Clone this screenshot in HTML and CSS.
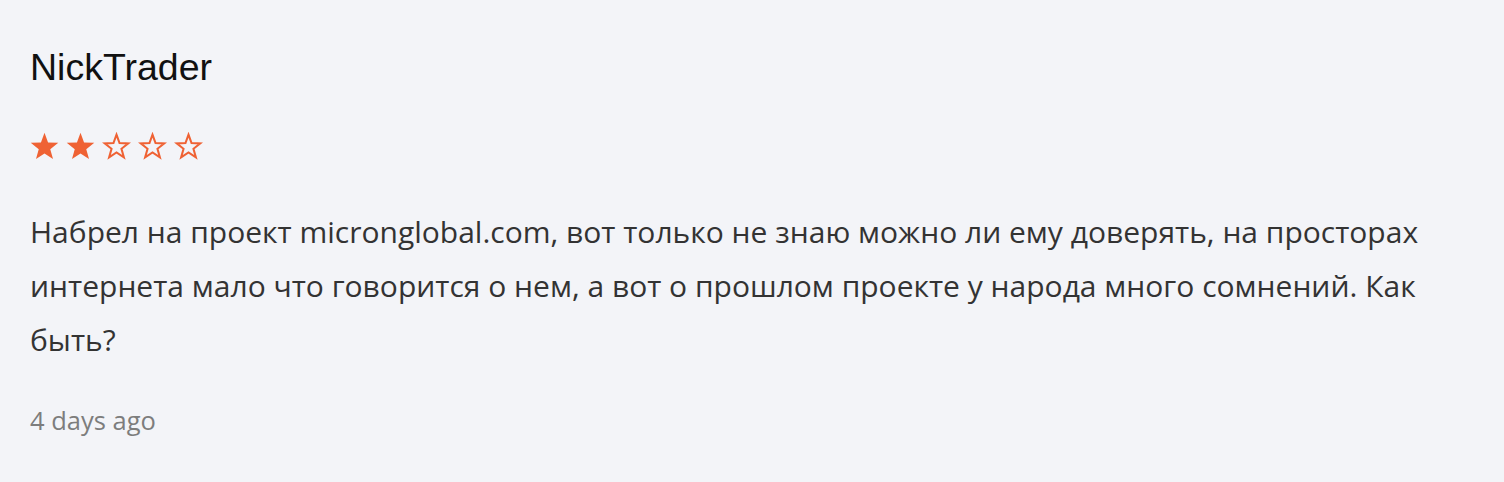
FILE: index.html
```html
<!DOCTYPE html>
<html lang="ru">
<head>
    <meta charset="UTF-8">
    <meta name="viewport" content="width=device-width, initial-scale=1.0">
    <title>NickTrader review</title>
    <link rel="stylesheet" href="styles.css">
</head>
<body>
    <div class="review">
        <h3 class="review-author">NickTrader</h3>

        <div class="rating">
            <svg class="star" viewBox="0 0 24 24"><path class="full" d="M12 .7l2.94 7.96 8.47.33-6.65 5.26 2.29 8.16L12 17.7l-7.05 4.71 2.29-8.16L.59 8.99l8.47-.33z"/></svg>
            <svg class="star" viewBox="0 0 24 24"><path class="full" d="M12 .7l2.94 7.96 8.47.33-6.65 5.26 2.29 8.16L12 17.7l-7.05 4.71 2.29-8.16L.59 8.99l8.47-.33z"/></svg>
            <svg class="star" viewBox="0 0 24 24"><path class="empty" d="M12 2.2l2.5 6.9 7.3.3-5.7 4.5 2 7L12 16.9l-6.1 4 2-7-5.7-4.5 7.3-.3z"/></svg>
            <svg class="star" viewBox="0 0 24 24"><path class="empty" d="M12 2.2l2.5 6.9 7.3.3-5.7 4.5 2 7L12 16.9l-6.1 4 2-7-5.7-4.5 7.3-.3z"/></svg>
            <svg class="star" viewBox="0 0 24 24"><path class="empty" d="M12 2.2l2.5 6.9 7.3.3-5.7 4.5 2 7L12 16.9l-6.1 4 2-7-5.7-4.5 7.3-.3z"/></svg>
        </div>

        <p class="review-text">Набрел на проект micronglobal.com, вот только не знаю можно ли ему доверять, на просторах интернета мало что говорится о нем, а вот о прошлом проекте у народа много сомнений. Как быть?</p>

        <p class="review-date">4 days ago</p>
    </div>
</body>
</html>
```

FILE: styles.css
```css
body {
    margin: 0;
    background: #f3f4f8;
    font-family: 'Open Sans', sans-serif;
    color: #333333;
}
.review {
    padding: 45px 30px 30px 30px;
    max-width: 1420px;
}
.review-author {
    margin: 0;
    font-family: 'Liberation Sans', Arial, sans-serif;
    font-weight: normal;
    font-size: 37.5px;
    line-height: 44px;
    color: #111111;
}
.rating {
    display: flex;
    gap: 7px;
    margin-top: 43px;
}
.star {
    width: 29px;
    height: 29px;
}
.star .full {
    fill: #ef6234;
}
.star .empty {
    fill: none;
    stroke: #ef6234;
    stroke-width: 1.7;
}
.review-text {
    margin: 44px 0 0 0;
    font-size: 30px;
    line-height: 54px;
}
.review-date {
    margin: 36px 0 0 0;
    font-size: 25.5px;
    line-height: 34px;
    color: #7d7d7d;
}
```
